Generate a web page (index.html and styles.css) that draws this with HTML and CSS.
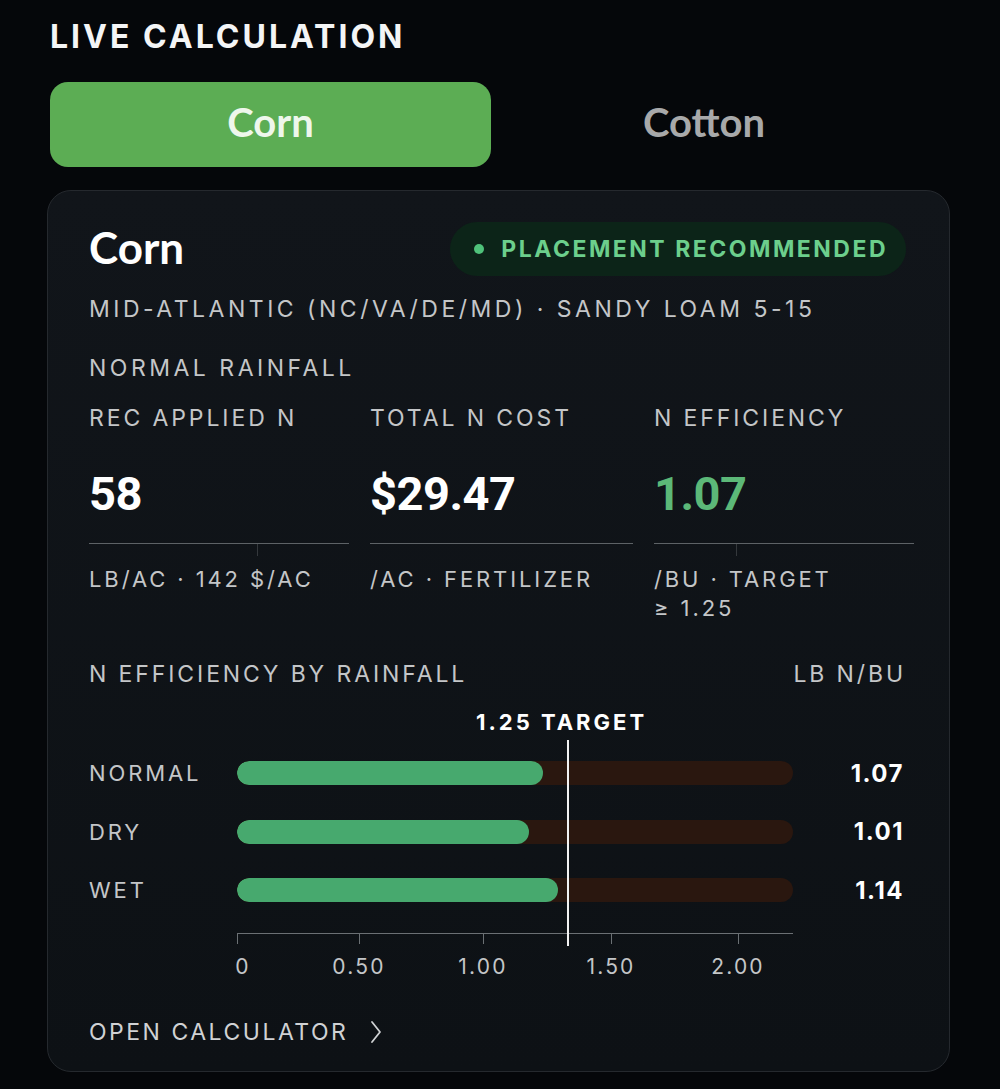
FILE: index.html
```html
<!DOCTYPE html>
<html>
<head>
<meta charset="utf-8">
<link rel="stylesheet" href="styles.css">
</head>
<body>
<div class="page">
  <h1 class="eyebrow">LIVE CALCULATION</h1>
  <div class="tabs">
    <div class="tab active">Corn</div>
    <div class="tab">Cotton</div>
  </div>
  <section class="card">
    <div class="card-head">
      <h2 class="crop">Corn</h2>
      <div class="badge"><span class="dot"></span>PLACEMENT RECOMMENDED</div>
    </div>
    <div class="meta">MID-ATLANTIC (NC/VA/DE/MD) · SANDY LOAM 5-15</div>
    <div class="meta meta2">NORMAL RAINFALL</div>
    <div class="stats">
      <div class="stat">
        <div class="stat-label">REC APPLIED N</div>
        <div class="stat-value">58</div>
        <div class="stat-rule"><span class="tick" style="left:168px"></span></div>
        <div class="stat-sub">LB/AC · 142 $/AC</div>
      </div>
      <div class="stat">
        <div class="stat-label">TOTAL N COST</div>
        <div class="stat-value">$29.47</div>
        <div class="stat-rule"></div>
        <div class="stat-sub">/AC · FERTILIZER</div>
      </div>
      <div class="stat">
        <div class="stat-label">N EFFICIENCY</div>
        <div class="stat-value green">1.07</div>
        <div class="stat-rule"><span class="tick" style="left:82px"></span></div>
        <div class="stat-sub">/BU · TARGET<br>≥ 1.25</div>
      </div>
    </div>
    <div class="chart-head">
      <span>N EFFICIENCY BY RAINFALL</span>
      <span>LB N/BU</span>
    </div>
    <div class="chart">
      <div class="target-label">1.25 TARGET</div>
      <div class="rows">
        <div class="row">
          <div class="row-label">NORMAL</div>
          <div class="track"><div class="fill" style="width:55%"></div></div>
          <div class="row-value">1.07</div>
        </div>
        <div class="row">
          <div class="row-label">DRY</div>
          <div class="track"><div class="fill" style="width:52.5%"></div></div>
          <div class="row-value">1.01</div>
        </div>
        <div class="row">
          <div class="row-label">WET</div>
          <div class="track"><div class="fill" style="width:57.7%"></div></div>
          <div class="row-value">1.14</div>
        </div>
        <div class="axis-row">
          <div></div>
          <div class="axis">
            <span class="axis-tick" style="left:0"></span>
            <span class="axis-tick" style="left:122px"></span>
            <span class="axis-tick" style="left:246px"></span>
            <span class="axis-tick" style="left:374px"></span>
            <span class="axis-tick" style="left:501px"></span>
            <span class="axis-num" style="left:6px">0</span>
            <span class="axis-num" style="left:122px">0.50</span>
            <span class="axis-num" style="left:246px">1.00</span>
            <span class="axis-num" style="left:374px">1.50</span>
            <span class="axis-num" style="left:501px">2.00</span>
          </div>
          <div></div>
        </div>
        <div class="target-line"></div>
      </div>
    </div>
    <div class="open">OPEN CALCULATOR
      <svg class="chev" viewBox="0 0 12 24" width="12" height="24"><path d="M2 2 L10 12 L2 22" fill="none" stroke="#d0d2d4" stroke-width="1.8" stroke-linecap="round" stroke-linejoin="round"/></svg>
    </div>
  </section>
</div>
</body>
</html>
```
FILE: styles.css
```css
* { box-sizing: border-box; }
html, body { margin: 0; padding: 0; }
body {
  background: #05070a;
  color: #fff;
  font-family: "Inter", "Roboto", sans-serif;
  width: 1000px;
  height: 1089px;
  overflow: hidden;
}
.page { padding: 20px 0 0 50px; }
.eyebrow {
  margin: 0;
  font-family: "Inter", sans-serif;
  font-weight: 700;
  font-size: 32px;
  line-height: 34px;
  letter-spacing: 3px;
  color: #f4f5f6;
}
.tabs {
  display: grid;
  grid-template-columns: 441px 426px;
  margin-top: 28px;
}
.tab {
  height: 85px;
  border-radius: 18px;
  display: flex;
  align-items: center;
  justify-content: center;
  padding-bottom: 6px;
  font-family: "Lato", sans-serif;
  font-weight: 700;
  font-size: 40px;
  color: #a8a9aa;
}
.tab.active {
  background: #5cad54;
  color: #eef7ec;
}
.card {
  margin: 23px 0 0 -3px;
  width: 903px;
  height: 882px;
  border-radius: 24px;
  border: 1px solid #25292e;
  background: linear-gradient(180deg, #11151a 0%, #0d1115 100%);
  padding: 30px 41px 0 41px;
}
.card-head {
  display: flex;
  justify-content: space-between;
  align-items: center;
  height: 56px;
  padding-right: 2px;
}
.crop {
  margin: 0 0 4px 0;
  font-family: "Lato", sans-serif;
  font-weight: 700;
  font-size: 44px;
  color: #fff;
}
.badge {
  height: 54px;
  padding: 0 18px 0 24px;
  border-radius: 27px;
  background: #0c2418;
  display: flex;
  align-items: center;
  gap: 17px;
  font-family: "Inter", sans-serif;
  font-weight: 700;
  font-size: 23px;
  letter-spacing: 2.5px;
  color: #6ccf8c;
}
.dot {
  width: 10px; height: 10px; border-radius: 50%;
  background: #4fc27a;
}
.meta, .stat-label, .chart-head, .row-label, .stat-sub, .open {
  font-family: "Inter", sans-serif;
  font-size: 23px;
  letter-spacing: 2.9px;
  line-height: 30px;
  color: #c4c6c8;
}
.meta { margin-top: 17px; letter-spacing: 3.5px; }
.meta2 { margin-top: 29px; }
.stats {
  margin-top: 20px;
  display: grid;
  grid-template-columns: 260px 263px 260px;
  column-gap: 21px;
}
.stat-value {
  margin-top: 36px;
  font-family: "Roboto", sans-serif;
  font-weight: 700;
  font-size: 47px;
  line-height: 50px;
  letter-spacing: -0.5px;
  color: #fff;
}
.stat-value.green { color: #5cb878; }
.stat-rule {
  position: relative;
  margin-top: 24px;
  height: 1px;
  background: #5d6266;
}
.tick {
  position: absolute;
  top: 1px;
  width: 1px;
  height: 12px;
  background: #34383c;
}
.stat-sub {
  margin-top: 21px;
  font-size: 22px;
  line-height: 29px;
}
.chart-head {
  margin-top: 36px;
  display: flex;
  justify-content: space-between;
  padding-right: 2px;
}
.chart { margin-top: 18px; }
.target-label {
  margin-left: 387px;
  font-family: "Inter", sans-serif;
  font-weight: 700;
  font-size: 22px;
  letter-spacing: 3px;
  line-height: 30px;
  color: #fff;
}
.rows {
  position: relative;
  margin-top: 7px;
}
.row {
  display: grid;
  grid-template-columns: 148px 556px 1fr;
  align-items: center;
  height: 58.5px;
}
.row-label { font-size: 22px; }
.track {
  height: 24px;
  border-radius: 12px;
  background: #2a170f;
  overflow: hidden;
}
.fill {
  height: 100%;
  border-radius: 12px;
  background: #47a96e;
}
.row-value {
  text-align: right;
  padding-right: 4px;
  font-family: "Inter", sans-serif;
  font-weight: 700;
  font-size: 24px;
  letter-spacing: 1.5px;
  color: #fff;
}
.axis-row {
  display: grid;
  grid-template-columns: 148px 556px 1fr;
  margin-top: 13px;
}
.axis {
  position: relative;
  height: 50px;
  border-top: 1.5px solid #6b7074;
}
.axis-tick {
  position: absolute;
  top: 0;
  width: 1px;
  height: 10px;
  background: #6b7074;
}
.axis-num {
  position: absolute;
  top: 20px;
  transform: translateX(-50%);
  font-family: "Inter", sans-serif;
  font-size: 21px;
  letter-spacing: 2.2px;
  color: #c4c6c8;
}
.target-line {
  position: absolute;
  left: 478px;
  top: -4px;
  width: 2px;
  height: 206px;
  background: #f2f2f2;
}
.open {
  margin-top: 34px;
  display: flex;
  align-items: center;
  gap: 22px;
  letter-spacing: 2.5px;
  color: #d0d2d4;
}
```
